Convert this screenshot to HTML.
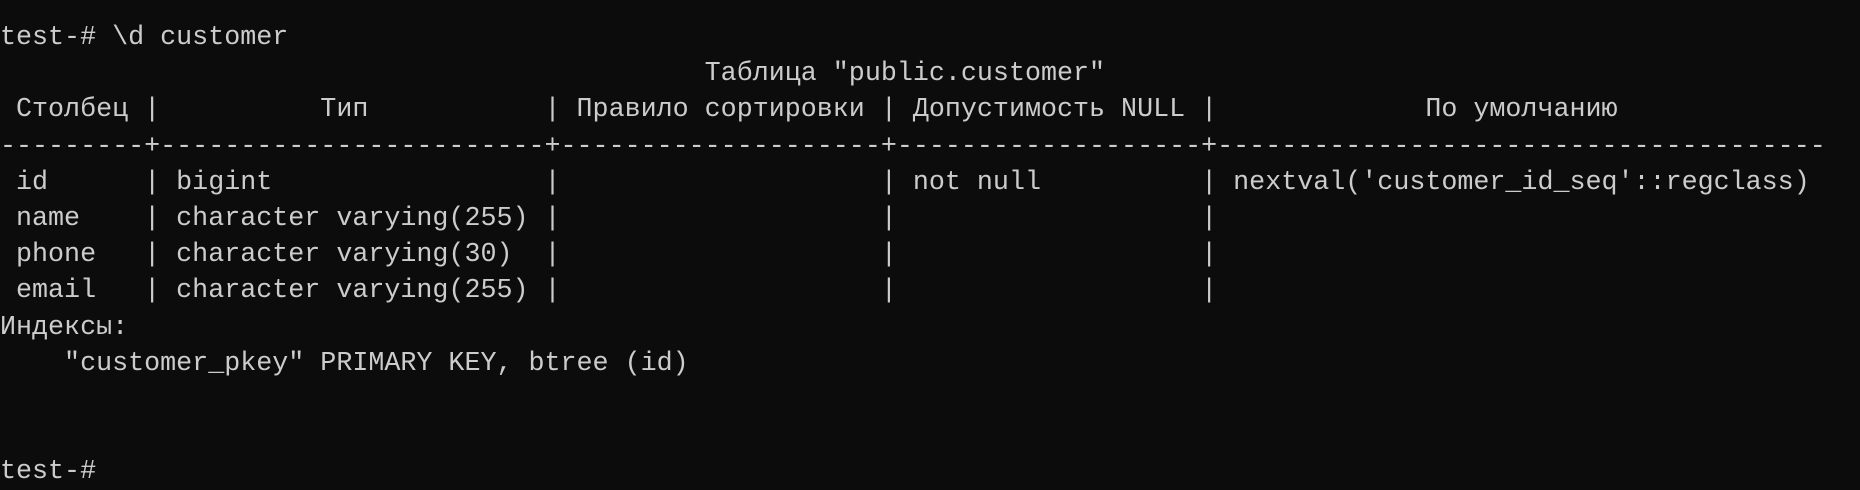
<!DOCTYPE html>
<html><head><meta charset="utf-8"><style>
html,body{margin:0;padding:0;background:#0c0c0c;width:1860px;height:490px;overflow:hidden}
pre{margin:0;padding:20px 0 0 0;font-family:"Liberation Mono","DejaVu Sans Mono",monospace;font-size:26.7px;line-height:36.2px;color:#cccccc;white-space:pre}
</style></head><body><pre>test-# \d customer
                                            Таблица "public.customer"
 Столбец |          Тип           | Правило сортировки | Допустимость NULL |             По умолчанию
---------+------------------------+--------------------+-------------------+--------------------------------------
 id      | bigint                 |                    | not null          | nextval('customer_id_seq'::regclass)
 name    | character varying(255) |                    |                   |
 phone   | character varying(30)  |                    |                   |
 email   | character varying(255) |                    |                   |
Индексы:
    "customer_pkey" PRIMARY KEY, btree (id)


test-#</pre></body></html>
